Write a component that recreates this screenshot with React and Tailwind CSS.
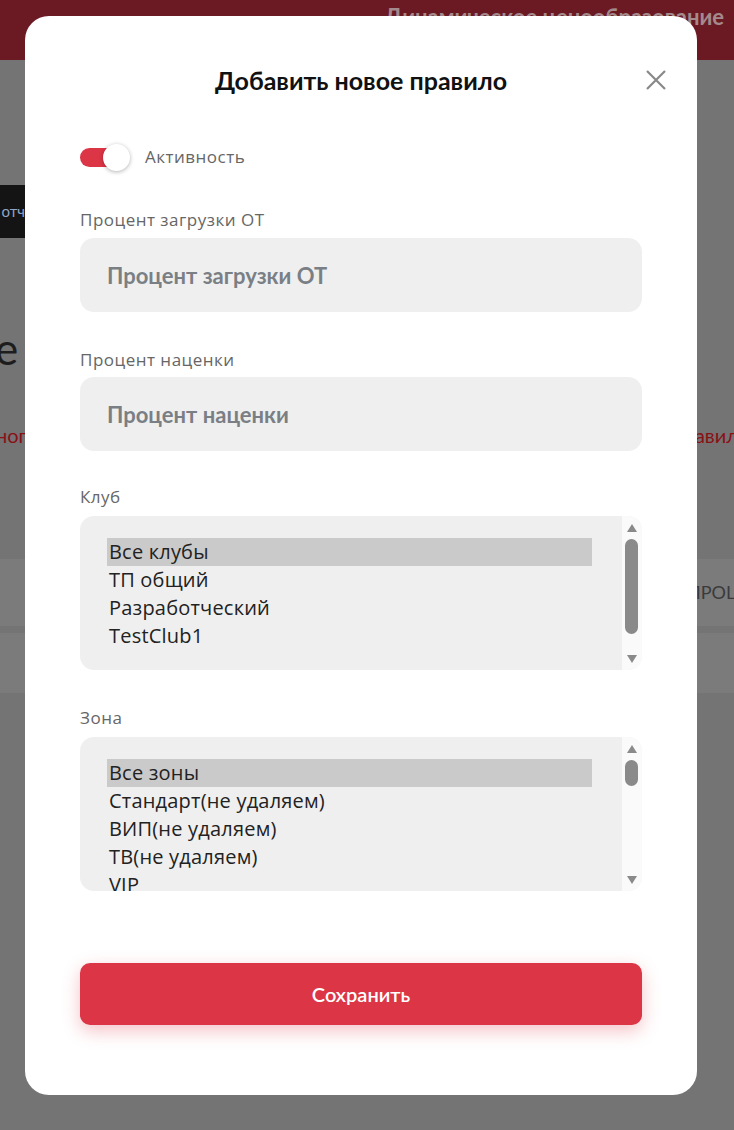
import React, { useState } from 'react';

const clubs = ['Все клубы', 'ТП общий', 'Разработческий', 'TestClub1'];
const zones = ['Все зоны', 'Стандарт(не удаляем)', 'ВИП(не удаляем)', 'ТВ(не удаляем)', 'VIP'];

function Scrollbar({ thumbTop, thumbHeight }) {
  return (
    <div className="flex w-[20px] shrink-0 flex-col items-center bg-[#fafafa] py-[6px]">
      <svg width="12" height="10" viewBox="0 0 12 10" className="mt-[1px]">
        <path d="M6 1 L11 9 L1 9 Z" fill="#8a8a8a" />
      </svg>
      <div className="relative w-full flex-1">
        <div
          className="absolute left-[3px] w-[13px] rounded-full bg-[#8a8a8a]"
          style={{ top: thumbTop, height: thumbHeight }}
        />
      </div>
      <svg width="12" height="10" viewBox="0 0 12 10">
        <path d="M1 1 L11 1 L6 9 Z" fill="#8a8a8a" />
      </svg>
    </div>
  );
}

function ListBox({ items, thumbTop, thumbHeight }) {
  const [selected, setSelected] = useState(0);
  return (
    <div className="flex h-[154px] overflow-hidden rounded-[14px] bg-[#efefef]">
      <div className="flex-1 overflow-hidden pl-[27px] pr-[30px] pt-[22px] font-['Open_Sans',sans-serif]">
        {items.map((it, i) => (
          <div
            key={it}
            onClick={() => setSelected(i)}
            className={
              'h-[28px] pl-[2px] text-[20px] leading-[28px] tracking-[0.2px] text-[#222] ' +
              (i === selected ? 'bg-[#cacaca]' : '')
            }
          >
            {it}
          </div>
        ))}
      </div>
      <Scrollbar thumbTop={thumbTop} thumbHeight={thumbHeight} />
    </div>
  );
}

function Label({ children }) {
  return (
    <div className="h-[20px] font-['Open_Sans',sans-serif] text-[17px] leading-[20px] tracking-[0.5px] text-[#666]">
      {children}
    </div>
  );
}

export default function App() {
  const [active, setActive] = useState(true);

  return (
    <div
      className="relative h-[1130px] w-full overflow-hidden bg-[#747474]"
      style={{ fontFamily: 'Lato, "Noto Sans", "Liberation Sans", sans-serif' }}
    >
      {/* dimmed page behind the modal */}
      <header className="flex h-[60px] justify-end bg-[#6b1a23] pr-[10px] pt-[3px]">
        <span className="text-[22px] font-bold leading-[28px] text-[#a48a8d]">Динамическое ценообразование</span>
      </header>
      <div className="mt-[125px] flex h-[53px] w-[25px] items-center justify-end overflow-hidden bg-[#141414]">
        <span className="text-[15px] text-[#8fa6c8]">отч</span>
      </div>
      <div className="mt-[80px] h-[60px] w-[25px] overflow-hidden">
        <span className="-ml-[5px] text-[44px] leading-[60px] text-[#1d1d1d]">e</span>
      </div>
      <div className="mt-[44px] flex justify-between text-[20px] leading-[26px] text-[#8a1016]">
        <span className="-ml-[4px]">ног</span>
        <span className="-mr-[4px]">авил</span>
      </div>
      <div className="mt-[111px] flex h-[67px] items-center justify-end bg-[#7b7b7b]">
        <span className="-mr-[6px] text-[18px] text-[#3a3a3a]">ПРОЦ</span>
      </div>
      <div className="mt-[7px] h-[60px] bg-[#7b7b7b]" />

      {/* modal */}
      <div className="absolute left-[25px] top-[16px] flex h-[1079px] w-[672px] flex-col rounded-[24px] bg-white px-[55px] pt-[48px]">
        <div className="relative flex items-center justify-center">
          <h2 className="text-[25px] font-bold leading-[32px] text-[#111]">Добавить новое правило</h2>
          <button className="absolute right-[-55px] top-[4px] mr-[29px] text-[#888]">
            <svg width="24" height="24" viewBox="0 0 24 24" fill="none" stroke="currentColor" strokeWidth="2.2">
              <path d="M3 3 L21 21 M21 3 L3 21" />
            </svg>
          </button>
        </div>

        <div className="mt-[48px] flex h-[26px] items-center">
          <button
            onClick={() => setActive(!active)}
            className={'relative h-[19px] w-[44px] rounded-full ' + (active ? 'bg-[#dc3545]' : 'bg-[#ccc]')}
          >
            <span
              className={
                'absolute top-[-4px] h-[27px] w-[27px] rounded-full bg-white shadow-[0_1px_4px_rgba(0,0,0,0.3)] ' +
                (active ? 'left-[23px]' : 'left-[-4px]')
              }
            />
          </button>
          <span className="ml-[21px] font-['Open_Sans',sans-serif] text-[17px] tracking-[0.5px] text-[#666]">
            Активность
          </span>
        </div>

        <div className="mt-[40px]">
          <Label>Процент загрузки ОТ</Label>
          <input
            placeholder="Процент загрузки ОТ"
            className="mt-[8px] h-[74px] w-full rounded-[14px] bg-[#efefef] px-[27px] text-[22px] font-bold text-[#333] outline-none placeholder:text-[#7a7f85]"
          />
        </div>

        <div className="mt-[38px]">
          <Label>Процент наценки</Label>
          <input
            placeholder="Процент наценки"
            className="mt-[7px] h-[74px] w-full rounded-[14px] bg-[#efefef] px-[27px] text-[22px] font-bold text-[#333] outline-none placeholder:text-[#7a7f85]"
          />
        </div>

        <div className="mt-[36px]">
          <Label>Клуб</Label>
          <div className="mt-[9px]">
            <ListBox items={clubs} thumbTop={6} thumbHeight={95} />
          </div>
        </div>

        <div className="mt-[38px]">
          <Label>Зона</Label>
          <div className="mt-[9px]">
            <ListBox items={zones} thumbTop={6} thumbHeight={26} />
          </div>
        </div>

        <button className="mt-[72px] h-[62px] w-full rounded-[10px] bg-[#dc3545] text-[20px] font-semibold text-white shadow-[0_6px_18px_rgba(220,53,69,0.3)]">
          Сохранить
        </button>
      </div>
    </div>
  );
}
